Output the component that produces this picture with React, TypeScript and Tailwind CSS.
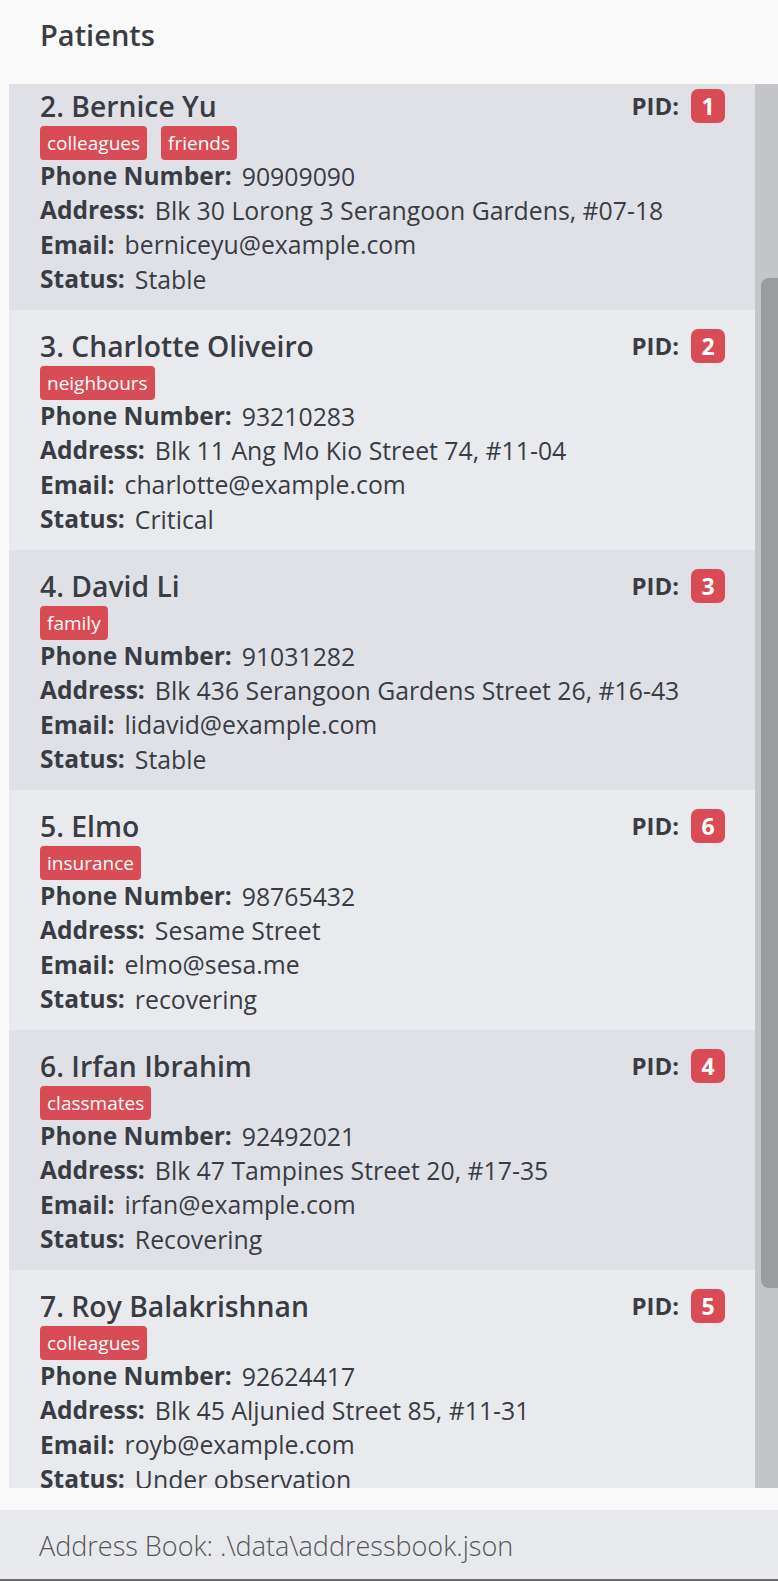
import React from "react";

interface Patient {
    index: number;
    name: string;
    pid: number;
    tags: string[];
    phone: string;
    address: string;
    email: string;
    status: string;
}

const patients: Patient[] = [
    {index: 2, name: "Bernice Yu", pid: 1, tags: ["colleagues", "friends"], phone: "90909090", address: "Blk 30 Lorong 3 Serangoon Gardens, #07-18", email: "berniceyu@example.com", status: "Stable"},
    {index: 3, name: "Charlotte Oliveiro", pid: 2, tags: ["neighbours"], phone: "93210283", address: "Blk 11 Ang Mo Kio Street 74, #11-04", email: "charlotte@example.com", status: "Critical"},
    {index: 4, name: "David Li", pid: 3, tags: ["family"], phone: "91031282", address: "Blk 436 Serangoon Gardens Street 26, #16-43", email: "lidavid@example.com", status: "Stable"},
    {index: 5, name: "Elmo", pid: 6, tags: ["insurance"], phone: "98765432", address: "Sesame Street", email: "elmo@sesa.me", status: "recovering"},
    {index: 6, name: "Irfan Ibrahim", pid: 4, tags: ["classmates"], phone: "92492021", address: "Blk 47 Tampines Street 20, #17-35", email: "irfan@example.com", status: "Recovering"},
    {index: 7, name: "Roy Balakrishnan", pid: 5, tags: ["colleagues"], phone: "92624417", address: "Blk 45 Aljunied Street 85, #11-31", email: "royb@example.com", status: "Under observation"},
];

const font = {fontFamily: '"Open Sans", "Noto Sans", sans-serif'};

const Field = ({label, value}: { label: string; value: string }) => (
    <div className="flex items-center gap-[10px] h-[34.4px] whitespace-nowrap">
        <span className="font-bold text-[24.5px]">{label}</span>
        <span className="text-[24.8px]">{value}</span>
    </div>
);

const PatientCard = ({patient, dark}: { patient: Patient; dark: boolean }) => (
    <div className={`h-[240px] pl-[31px] pr-[30px] pt-[19px] ${dark ? "bg-[#dfe1e6]" : "bg-[#e9eaee]"}`}>
        {/* name and pid */}
        <div className="flex items-center justify-between h-[34px]">
            <span className="text-[28.3px] font-semibold">{patient.index}. {patient.name}</span>
            <div className="flex items-center gap-[12px]">
                <span className="text-[24px] font-bold">PID:</span>
                <span
                    className="w-[34px] h-[34px] rounded-[7px] bg-[#d94b55] text-white text-[23px] font-bold flex items-center justify-center">
                    {patient.pid}
                </span>
            </div>
        </div>
        {/* tags */}
        <div className="flex gap-[14px] mt-[3px] mb-[-1px]">
            {patient.tags.map((tag) => (
                <span key={tag}
                      className="h-[34px] px-[7px] rounded-[4px] bg-[#d94b55] text-white text-[19px] leading-[34px]">
                    {tag}
                </span>
            ))}
        </div>
        <Field label="Phone Number:" value={patient.phone}/>
        <Field label="Address:" value={patient.address}/>
        <Field label="Email:" value={patient.email}/>
        <Field label="Status:" value={patient.status}/>
    </div>
);

export default function App() {
    return (
        <div className="w-[778px] h-[1581px] bg-[#fafafa] flex flex-col overflow-hidden text-[#3a3c44]" style={font}>
            {/* header */}
            <div className="h-[84px] px-[40px] pt-[14px]">
                <h1 className="text-[29px] font-semibold leading-[42px]">Patients</h1>
            </div>

            {/* patient list */}
            <div className="flex h-[1404px] pl-[9px]">
                <div className="flex-1 overflow-hidden">
                    <div className="mt-[-14px]">
                        {patients.map((p, i) => (
                            <PatientCard key={p.pid} patient={p} dark={i % 2 === 0}/>
                        ))}
                    </div>
                </div>
                {/* scrollbar */}
                <div className="w-[23px] bg-[#c4c5c9] pt-[194px] flex flex-col items-end">
                    <div className="h-[1010px] w-[17px] rounded-l-[8px] bg-[#9b9ca0]"/>
                </div>
            </div>

            {/* status bar */}
            <div className="mt-[22px] h-[71px] bg-[#e8e9ed] border-b-[2px] border-[#6e6e6e] px-[39px] pt-[4px] flex items-center">
                <span className="text-[27px] font-light text-[#55565c]">Address Book: .\data\addressbook.json</span>
            </div>
        </div>
    );
}
